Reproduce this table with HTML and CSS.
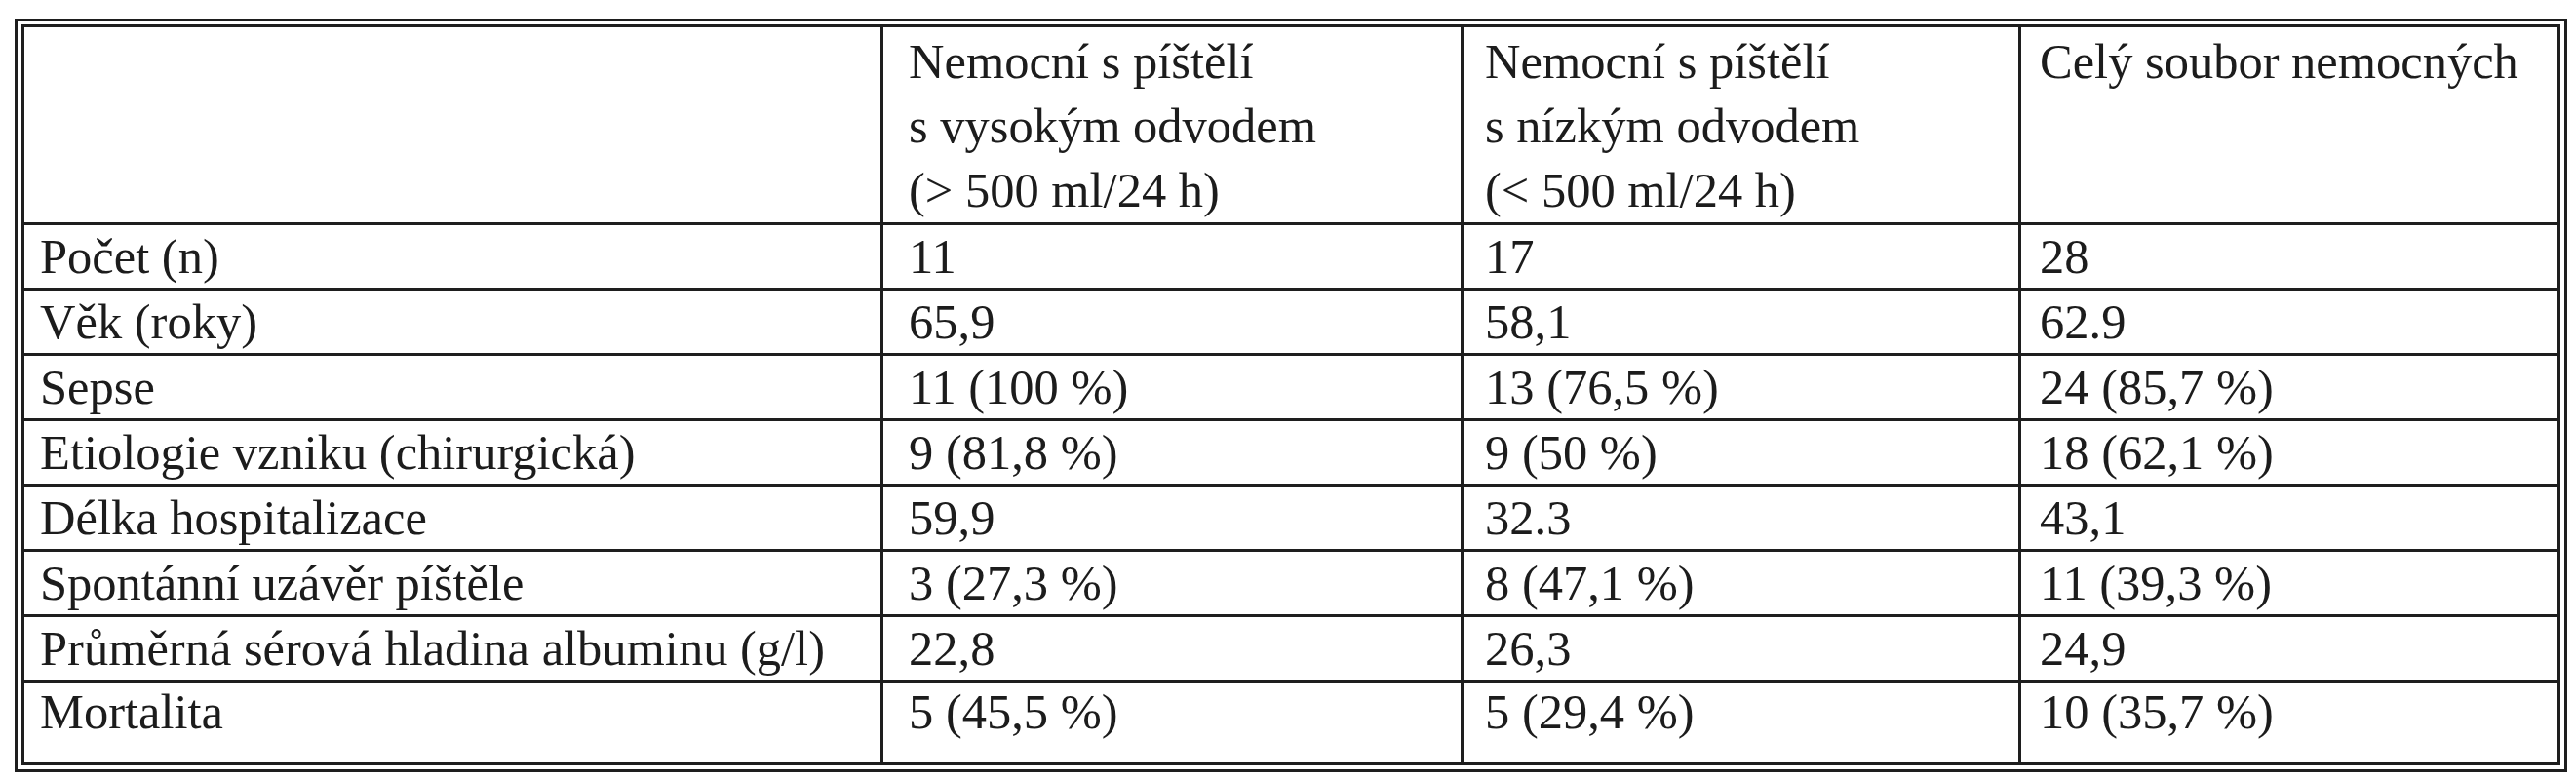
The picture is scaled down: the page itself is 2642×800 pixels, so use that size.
FILE: index.html
```html
<!DOCTYPE html>
<html lang="cs">
<head>
<meta charset="utf-8">
<title>Tabulka</title>
<link rel="stylesheet" href="styles.css">
</head>
<body>
<div class="frame">
  <table class="data">
    <tr class="head">
      <td class="c1"></td>
      <td class="c2">Nemocní s píštělí<br>s vysokým odvodem<br>(&gt; 500 ml/24 h)</td>
      <td class="c3">Nemocní s píštělí<br>s nízkým odvodem<br>(&lt; 500 ml/24 h)</td>
      <td class="c4">Celý soubor nemocných</td>
    </tr>
    <tr>
      <td class="c1">Počet (n)</td>
      <td class="c2">11</td>
      <td class="c3">17</td>
      <td class="c4">28</td>
    </tr>
    <tr>
      <td class="c1">Věk (roky)</td>
      <td class="c2">65,9</td>
      <td class="c3">58,1</td>
      <td class="c4">62.9</td>
    </tr>
    <tr>
      <td class="c1">Sepse</td>
      <td class="c2">11 (100 %)</td>
      <td class="c3">13 (76,5 %)</td>
      <td class="c4">24 (85,7 %)</td>
    </tr>
    <tr>
      <td class="c1">Etiologie vzniku (chirurgická)</td>
      <td class="c2">9 (81,8 %)</td>
      <td class="c3">9 (50 %)</td>
      <td class="c4">18 (62,1 %)</td>
    </tr>
    <tr>
      <td class="c1">Délka hospitalizace</td>
      <td class="c2">59,9</td>
      <td class="c3">32.3</td>
      <td class="c4">43,1</td>
    </tr>
    <tr>
      <td class="c1">Spontánní uzávěr píštěle</td>
      <td class="c2">3 (27,3 %)</td>
      <td class="c3">8 (47,1 %)</td>
      <td class="c4">11 (39,3 %)</td>
    </tr>
    <tr>
      <td class="c1">Průměrná sérová hladina albuminu (g/l)</td>
      <td class="c2">22,8</td>
      <td class="c3">26,3</td>
      <td class="c4">24,9</td>
    </tr>
    <tr class="last">
      <td class="c1">Mortalita</td>
      <td class="c2">5 (45,5 %)</td>
      <td class="c3">5 (29,4 %)</td>
      <td class="c4">10 (35,7 %)</td>
    </tr>
  </table>
</div>
</body>
</html>
```

FILE: styles.css
```css
html, body {
  margin: 0;
  padding: 0;
  background: #ffffff;
}

body {
  font-family: "Liberation Serif", "Times New Roman", serif;
  font-size: 50.5px;
  color: #1c1c1c;
}

.frame {
  margin: 19px 0 0 15px;
  width: 2604px;
  padding: 3px 4px 4px 4px;
  border: 3px solid #1e1e1e;
}

.data {
  width: 2604px;
  table-layout: fixed;
  border-collapse: separate;
  border-spacing: 0;
  border: 3px solid #1e1e1e;
}

.data td {
  box-sizing: border-box;
  vertical-align: top;
  padding: 3px 0 3px 0;
  line-height: 58px;
  white-space: nowrap;
}

.data tr + tr td {
  border-top: 3px solid #1e1e1e;
}

.data td + td {
  border-left: 3px solid #1e1e1e;
}

.data .head td {
  padding-top: 2px;
  padding-bottom: 0;
  line-height: 66px;
}

.data .last td {
  padding-top: 1px;
  padding-bottom: 23px;
}

.data .c1 { width: 878px; padding-left: 16px; }
.data .c2 { width: 595px; padding-left: 26px; }
.data .c3 { width: 572px; padding-left: 22px; }
.data .c4 { width: 553px; padding-left: 19px; }
```
